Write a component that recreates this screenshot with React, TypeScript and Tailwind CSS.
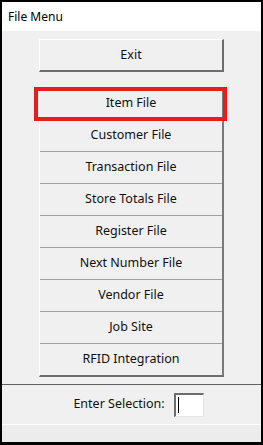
import React from "react";

const items = [
  "Item File",
  "Customer File",
  "Transaction File",
  "Store Totals File",
  "Register File",
  "Next Number File",
  "Vendor File",
  "Job Site",
  "RFID Integration",
];

export default function App() {
  return (
    <div
      className="w-[263px] h-[445px] bg-black p-[2px] pb-[3px]"
      style={{ fontFamily: '"Noto Sans", "Open Sans", sans-serif' }}
    >
      <div className="w-full h-full flex flex-col bg-[#f0f0f0] relative">
        <div className="h-[29px] bg-white flex items-center pl-[6px] text-[12px] text-black shrink-0">
          File Menu
        </div>
        <div className="flex flex-col items-center pt-[8px]">
          <button className="w-[185px] h-[33px] bg-[#f0f0f0] border-t border-l border-white border-r-2 border-b-2 border-r-[#6d6d6d] border-b-[#6d6d6d] text-[12.5px] text-[#111]">
            Exit
          </button>
          <div className="mt-[15px] w-[185px] flex flex-col border-l border-white border-r-2 border-r-[#7a7a7a] border-b-2 border-b-[#6d6d6d]">
            {items.map((t, i) => (
              <div
                key={t}
                className={
                  "h-[32px] flex items-center justify-center text-[12.5px] text-[#111] " +
                  (i > 0 ? "border-t border-[#a0a0a0]" : "")
                }
              >
                {t}
              </div>
            ))}
          </div>
        </div>
        <div className="mt-[7px] h-px bg-[#646464] shrink-0" />
        <div className="h-[39px] flex items-center justify-center gap-[9px] pl-[14px] shrink-0">
          <span className="text-[12.5px] text-[#111]">Enter Selection:</span>
          <div className="w-[30px] h-[24px] bg-white border-t-2 border-l-2 border-[#6d6d6d] border-r border-b border-r-[#e3e3e3] border-b-[#e3e3e3] flex items-center pl-[2px]">
            <div className="w-px h-[16px] bg-black" />
          </div>
        </div>
        <div className="h-px bg-white shrink-0" />
        <div className="flex-1 bg-[#ececec]" />
        <div className="absolute left-[32px] top-[85px] w-[193px] h-[34px] border-4 border-[#e81c1c] pointer-events-none" />
      </div>
    </div>
  );
}
